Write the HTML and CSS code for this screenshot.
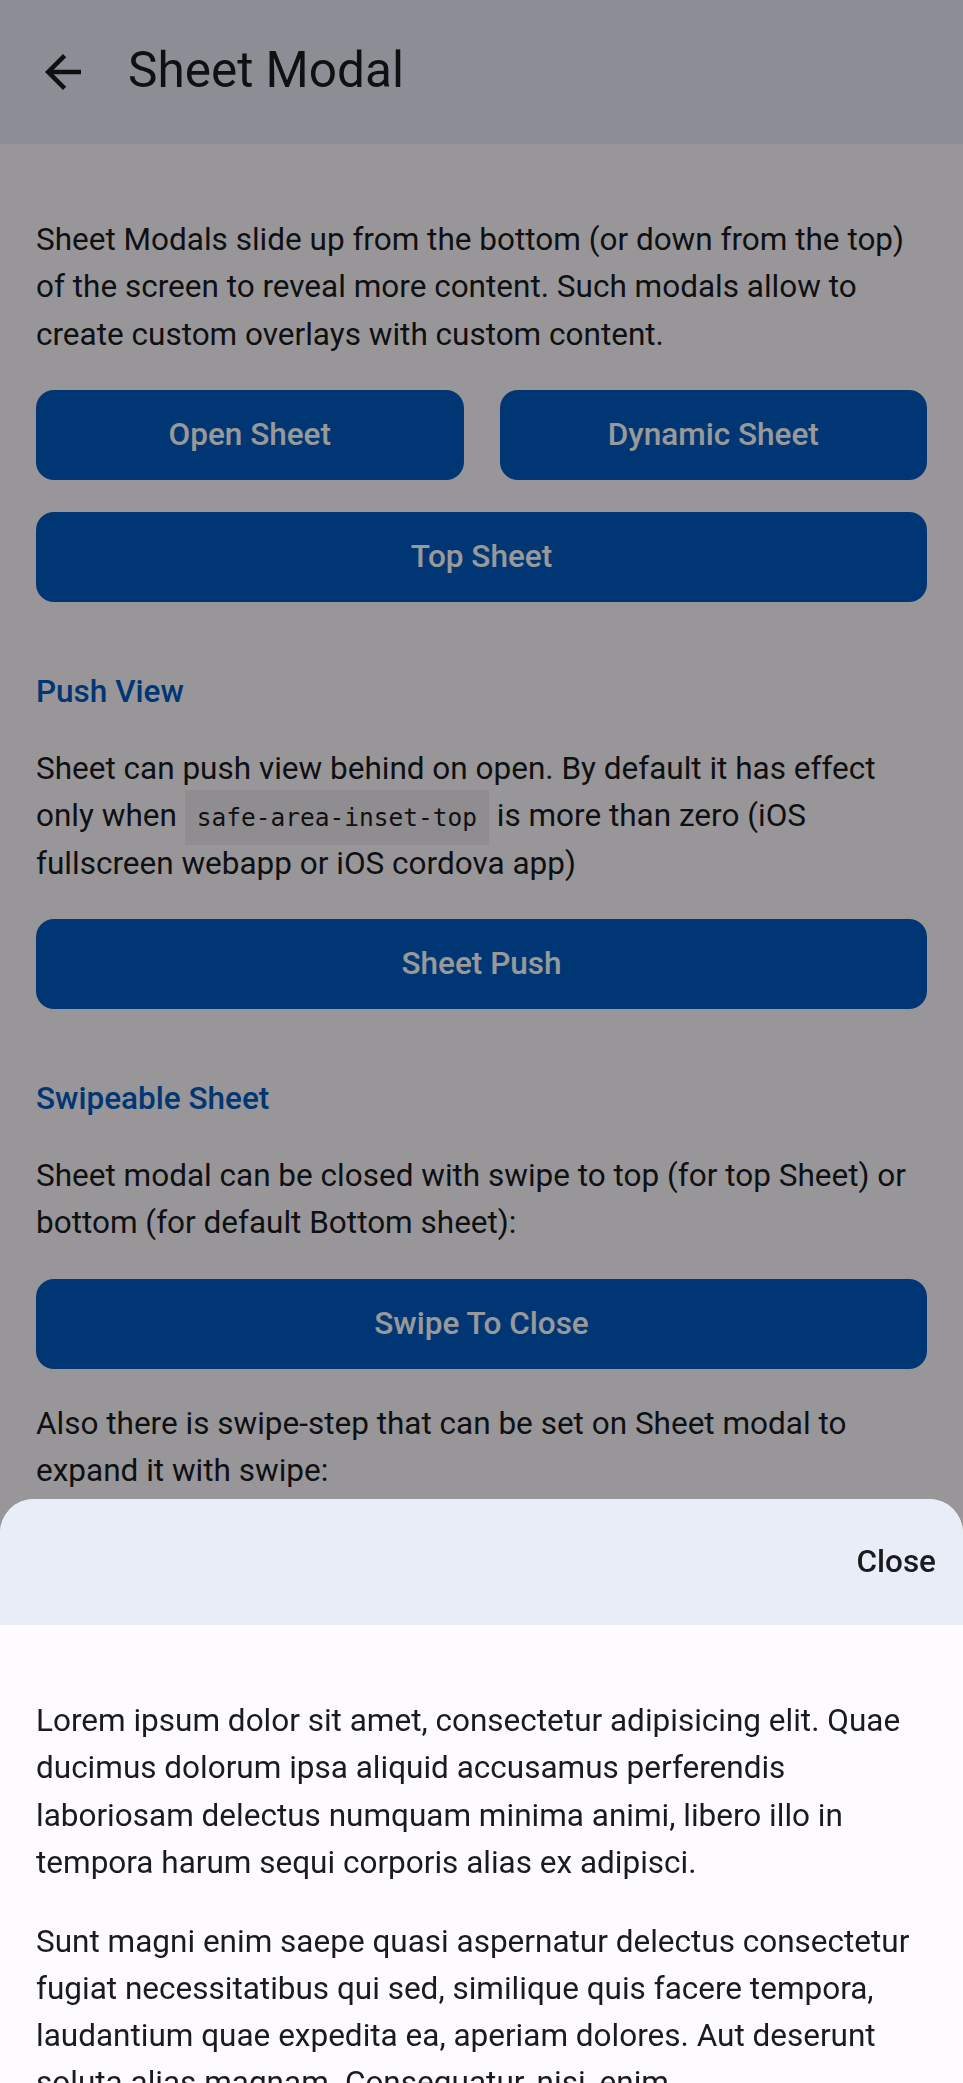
FILE: index.html
```html
<!DOCTYPE html>
<html lang="en">
<head>
<meta charset="utf-8">
<title>Sheet Modal</title>
<link rel="stylesheet" href="styles.css">
</head>
<body>
<div class="page">
  <header class="navbar">
    <a class="back-link" href="#" aria-label="Back">
      <svg class="back-icon" viewBox="0 0 24 24" aria-hidden="true"><path d="M20 11H7.83l5.59-5.59L12 4l-8 8 8 8 1.41-1.41L7.83 13H20v-2z"/></svg>
    </a>
    <div class="title">Sheet Modal</div>
  </header>

  <main class="page-content">
    <section class="block block-first">
      <p class="text">Sheet Modals slide up from the bottom (or down from the top) of the screen to reveal more content. Such modals allow to create custom overlays with custom content.</p>
      <div class="btn-row">
        <a class="button" href="#">Open Sheet</a>
        <a class="button" href="#">Dynamic Sheet</a>
      </div>
      <a class="button button-full" href="#">Top Sheet</a>
    </section>

    <h2 class="block-title">Push View</h2>
    <section class="block">
      <p class="text text-after-title">Sheet can push view behind on open. By default it has effect only when <code class="code">safe-area-inset-top</code> is more than zero (iOS fullscreen webapp or iOS cordova app)</p>
      <a class="button button-full" href="#">Sheet Push</a>
    </section>

    <h2 class="block-title">Swipeable Sheet</h2>
    <section class="block">
      <p class="text text-after-title">Sheet modal can be closed with swipe to top (for top Sheet) or bottom (for default Bottom sheet):</p>
      <a class="button button-full" href="#">Swipe To Close</a>
      <p class="text text-after-button">Also there is swipe-step that can be set on Sheet modal to expand it with swipe:</p>
    </section>
  </main>
</div>

<div class="backdrop"></div>

<div class="sheet">
  <div class="sheet-toolbar">
    <a class="sheet-close" href="#">Close</a>
  </div>
  <div class="sheet-body">
    <p class="sheet-text">Lorem ipsum dolor sit amet, consectetur adipisicing elit. Quae ducimus dolorum ipsa aliquid accusamus perferendis laboriosam delectus numquam minima animi, libero illo in tempora harum sequi corporis alias ex adipisci.</p>
    <p class="sheet-text">Sunt magni enim saepe quasi aspernatur delectus consectetur fugiat necessitatibus qui sed, similique quis facere tempora, laudantium quae expedita ea, aperiam dolores. Aut deserunt soluta alias magnam. Consequatur, nisi, enim.</p>
    <p class="sheet-text">Eaque aut omnis, a doloremque nihil unde dolores. Odio, consectetur, nostrum quaerat ipsum illum exercitationem.</p>
  </div>
</div>
</body>
</html>
```

FILE: styles.css
```css
html, body {
  margin: 0;
  padding: 0;
}

body {
  width: 963px;
  height: 2083px;
  overflow: hidden;
  background: #fdfbff;
  font-family: Roboto, "Noto Sans", "Liberation Sans", sans-serif;
  color: #1a1b1f;
  position: relative;
}

.page {
  background: #fdfbff;
}

.navbar {
  height: 144px;
  background: #e8edf8;
  display: flex;
  align-items: center;
  box-sizing: border-box;
  padding-left: 36px;
}

.back-link {
  width: 54px;
  height: 54px;
  display: flex;
  align-items: center;
  justify-content: center;
  margin-right: 38px;
}

.back-icon {
  width: 54px;
  height: 54px;
  fill: #1a1b1f;
}

.title {
  font-size: 49.5px;
  font-weight: 400;
  color: #1a1b1f;
  line-height: 1;
  margin-top: -2px;
}

.page-content {
  padding: 0;
}

.block {
  padding: 0 36px;
  margin: 0;
}

.block-first {
  margin-top: 72px;
}

.text {
  margin: 0;
  font-size: 31.5px;
  line-height: 47.25px;
  color: #1a1b1f;
}

.text-after-title {
  margin-top: 30px;
}

.text-after-button {
  margin-top: 31px;
}

.btn-row {
  display: grid;
  grid-template-columns: 1fr 1fr;
  gap: 36px;
  margin-top: 32px;
}

.button {
  display: flex;
  align-items: center;
  justify-content: center;
  height: 90px;
  border-radius: 18px;
  background: #005ac1;
  color: #ffffff;
  font-size: 31.5px;
  font-weight: 500;
  text-decoration: none;
  box-sizing: border-box;
}

.button-full {
  margin-top: 32px;
}

.block-title {
  margin: 66px 0 0 0;
  padding: 0 36px;
  font-size: 31.5px;
  line-height: 47.25px;
  font-weight: 500;
  color: #005ac1;
}

.code {
  font-family: "DejaVu Sans Mono", "Liberation Mono", monospace;
  font-size: 24.5px;
  line-height: 1;
  background: rgba(0, 0, 0, 0.06);
  padding: 13px 12px;
  color: #1a1b1f;
}

.backdrop {
  position: fixed;
  inset: 0;
  background: rgba(0, 0, 0, 0.4);
}

.sheet {
  position: fixed;
  left: 0;
  right: 0;
  bottom: 0;
  height: 584px;
  background: #fdfbff;
  border-radius: 34px 34px 0 0;
  overflow: hidden;
}

.sheet-toolbar {
  height: 126px;
  background: #e8edf8;
  display: flex;
  align-items: center;
  justify-content: flex-end;
  padding-right: 27px;
}

.sheet-close {
  font-size: 31.5px;
  font-weight: 500;
  color: #1a1b1f;
  text-decoration: none;
  margin-top: -2px;
}

.sheet-body {
  padding: 72px 36px 0;
}

.sheet-text {
  margin: 0 0 31.5px;
  font-size: 31.5px;
  line-height: 47.25px;
  color: #1a1b1f;
}
```
